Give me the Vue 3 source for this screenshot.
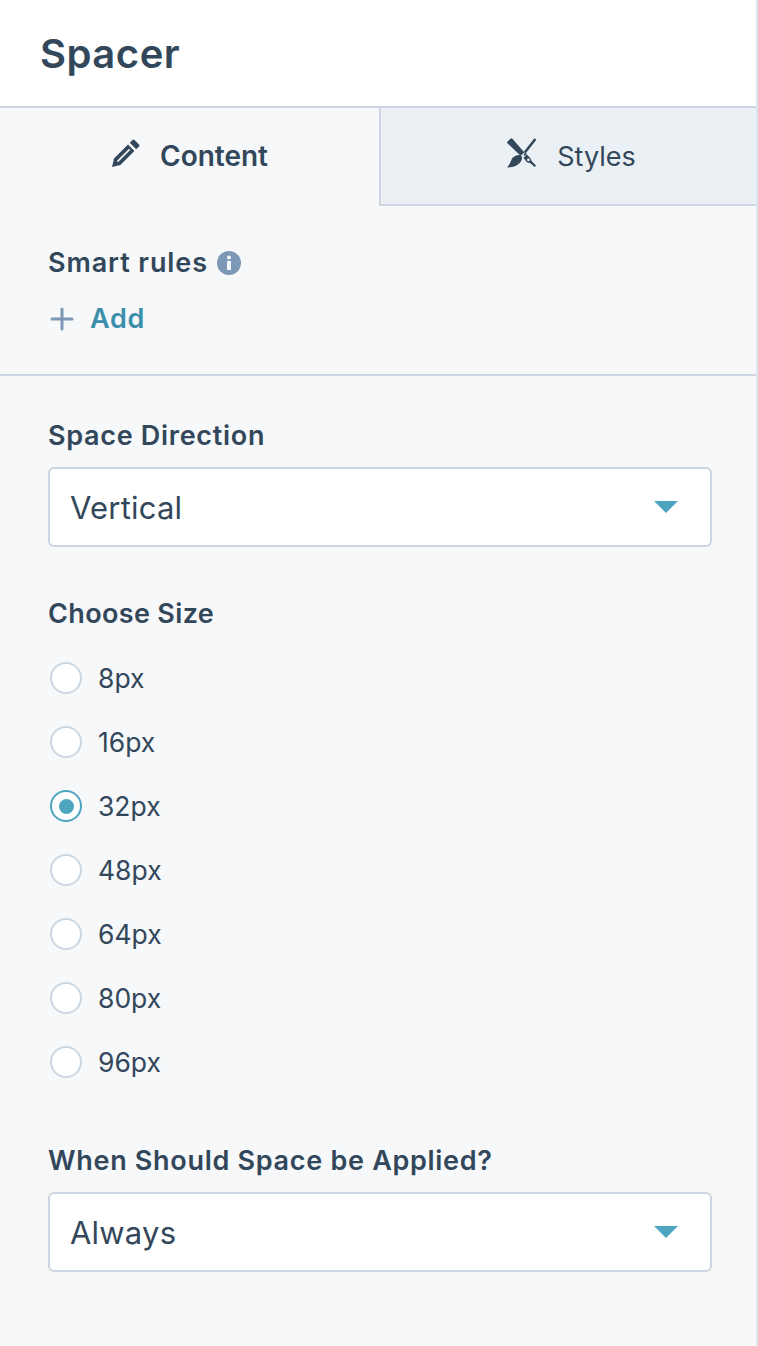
<template>
  <div class="panel">
    <header class="panel-header">
      <h1 class="panel-title">Spacer</h1>
    </header>

    <div class="tabs">
      <div class="tab active">
        <svg class="tab-icon" viewBox="0 0 30 30" width="30" height="30" fill="#33475b">
          <path d="M1 29l2-8.4L17 6.6l6.4 6.4L9.4 27z" />
          <path d="M6.4 23.6L18.6 11.4" stroke="#f6f8fa" stroke-width="1.6" fill="none" />
          <path d="M18.8 4.8l3-3a1 1 0 0 1 1.4 0l5 5a1 1 0 0 1 0 1.4l-3 3z" />
        </svg>
        <span>Content</span>
      </div>
      <div class="tab">
        <svg class="tab-icon" viewBox="0 0 30 30" width="30" height="30" fill="#33475b">
          <path d="M0.6 3.4L3.4 .8a1.4 1.4 0 0 1 2 0l12 13.6-3.8 3.4L.6 5.4a1.4 1.4 0 0 1 0-2z" />
          <path d="M5 20.6c2-2.6 5-4 8-3.6 2 .4 2.6 3.4 1.4 5.6C12 27.6 6 29.6 0 29.4c2.4-2 3.4-5.4 5-8.8z" />
          <path d="M27 .8c.8-.8 2.6.6 1.8 1.6L18.6 15.4l-1.8-1.6z" />
          <path d="M16.4 16.6l2.2-1.8 1.2 1.2-2 2z" />
          <path fill-rule="evenodd" d="M20 16.6l3.4 3.6 1.4 3 4.2 4.4-1.4 1.4-4.2-3.8-3.4-1-3.6-4.4z M21.4 20.4a1.4 1.4 0 1 0 .1 0z" />
        </svg>
        <span>Styles</span>
      </div>
    </div>

    <section class="rules">
      <div class="rules-label">
        <span>Smart rules</span>
        <svg class="info-icon" viewBox="0 0 24 24" width="24" height="24">
          <circle cx="12" cy="12" r="12" fill="#7c98b6" />
          <circle cx="12" cy="6.6" r="2" fill="#f6f8fa" />
          <rect x="10" y="10" width="4" height="9" fill="#f6f8fa" />
        </svg>
      </div>
      <div class="add-row">
        <svg viewBox="0 0 24 24" width="24" height="24" fill="none" stroke="#7c98b6" stroke-width="3" stroke-linecap="round">
          <path d="M12 2v20M2 12h20" />
        </svg>
        <span class="add-text">Add</span>
      </div>
    </section>

    <section class="fields">
      <label class="field-label">Space Direction</label>
      <div class="select">
        <span class="select-value">Vertical</span>
        <i class="caret"></i>
      </div>

      <label class="field-label size-label">Choose Size</label>
      <div class="radios">
        <div v-for="size in sizes" :key="size" class="radio-row">
          <span class="radio" :class="{ checked: size === selected }"></span>
          <span>{{ size }}</span>
        </div>
      </div>

      <label class="field-label when-label">When Should Space be Applied?</label>
      <div class="select">
        <span class="select-value">Always</span>
        <i class="caret"></i>
      </div>
    </section>
  </div>
</template>

<script setup>
const sizes = ['8px', '16px', '32px', '48px', '64px', '80px', '96px']
const selected = '32px'
</script>

<style scoped>
.panel {
  width: 758px;
  height: 1346px;
  box-sizing: border-box;
  overflow: hidden;
  background: #f6f8fa;
  border-right: 2px solid #dfe3eb;
  color: #33475b;
  font-family: Inter, "Liberation Sans", sans-serif;
}

.panel-header {
  height: 106px;
  box-sizing: border-box;
  padding-left: 40px;
  display: flex;
  align-items: center;
  background: #fff;
}

.panel-title {
  margin: 0;
  font-size: 40px;
  font-weight: 600;
  letter-spacing: 0.5px;
}

.tabs {
  display: flex;
  height: 98px;
  border-top: 2px solid #cbd6e2;
}

.tab {
  flex: 1;
  display: flex;
  align-items: center;
  justify-content: center;
  gap: 20px;
  font-size: 27px;
  background: #ebf0f5;
  border-bottom: 2px solid #cbd6e2;
  border-left: 2px solid #cbd6e2;
  padding: 0 0 0 6px;
}

.tab.active {
  flex: none;
  width: 379px;
  gap: 19px;
  background: #f6f8fa;
  border: none;
  padding: 0 0 2px;
  font-size: 28px;
  font-weight: 600;
}

.tab-icon {
  margin-bottom: 7px;
}

.rules {
  height: 170px;
  box-sizing: border-box;
  padding: 40px 48px 0;
  border-bottom: 2px solid #cbd6e2;
}

.rules-label {
  display: flex;
  align-items: center;
  gap: 9px;
  font-size: 27px;
  font-weight: 600;
  letter-spacing: 0.9px;
  line-height: 34px;
}

.add-row {
  display: flex;
  align-items: center;
  gap: 16px;
  margin-top: 22px;
  margin-left: 2px;
}

.add-text {
  color: #3c8fab;
  font-size: 27px;
  font-weight: 600;
  letter-spacing: 0.7px;
  line-height: 34px;
}

.fields {
  padding: 43px 44px 0 48px;
}

.field-label {
  display: block;
  font-size: 27px;
  font-weight: 600;
  letter-spacing: 0.7px;
  line-height: 34px;
}

.select {
  display: flex;
  align-items: center;
  justify-content: space-between;
  height: 80px;
  box-sizing: border-box;
  margin-top: 14px;
  padding: 0 32px 0 20px;
  background: #fff;
  border: 2px solid #cbd6e2;
  border-radius: 6px;
  font-size: 31px;
  letter-spacing: 0.2px;
}

.caret {
  width: 0;
  height: 0;
  border-left: 12px solid transparent;
  border-right: 12px solid transparent;
  border-top: 12px solid #4ea5bf;
}

.size-label {
  margin-top: 50px;
  letter-spacing: 0.35px;
}

.radios {
  margin-top: 15px;
}

.radio-row {
  display: flex;
  align-items: center;
  gap: 16px;
  height: 64px;
  margin-left: 2px;
  font-size: 26.5px;
}

.radio {
  width: 32px;
  height: 32px;
  box-sizing: border-box;
  border: 2px solid #cbd6e2;
  border-radius: 50%;
  background: #fff;
  display: flex;
  align-items: center;
  justify-content: center;
}

.radio.checked {
  border-color: #4ea5bf;
}

.radio.checked::after {
  content: "";
  width: 15px;
  height: 15px;
  border-radius: 50%;
  background: #4ea5bf;
}

.when-label {
  margin-top: 50px;
}
</style>
